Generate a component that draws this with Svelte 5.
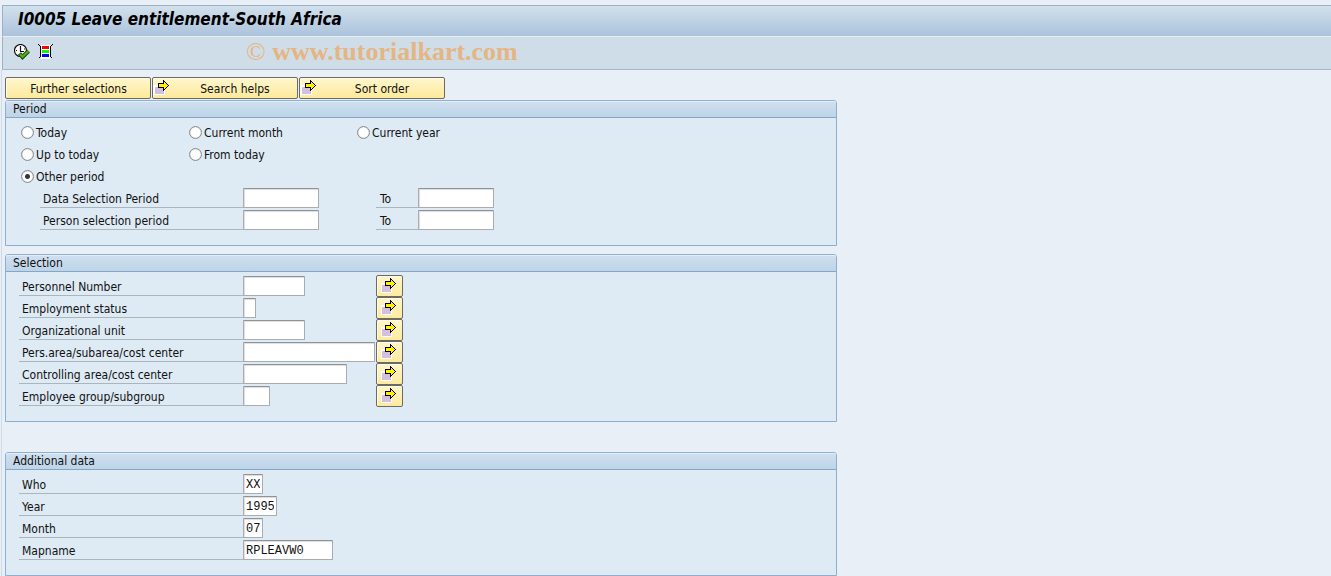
<script lang="ts">
  let period = $state('other');

  const periods = [
    { id: 'today', label: 'Today' },
    { id: 'month', label: 'Current month' },
    { id: 'year', label: 'Current year' },
    { id: 'upto', label: 'Up to today' },
    { id: 'from', label: 'From today' },
    { id: 'other', label: 'Other period' },
  ];

  const ranges = [
    { id: 'data', label: 'Data Selection Period' },
    { id: 'person', label: 'Person selection period' },
  ];

  const selection = [
    { id: 'pernr', label: 'Personnel Number', width: 62 },
    { id: 'status', label: 'Employment status', width: 13 },
    { id: 'orgunit', label: 'Organizational unit', width: 62 },
    { id: 'persarea', label: 'Pers.area/subarea/cost center', width: 132 },
    { id: 'coarea', label: 'Controlling area/cost center', width: 104 },
    { id: 'group', label: 'Employee group/subgroup', width: 27 },
  ];

  const additional = $state([
    { id: 'who', label: 'Who', value: 'XX', width: 20 },
    { id: 'yr', label: 'Year', value: '1995', width: 34 },
    { id: 'mon', label: 'Month', value: '07', width: 20 },
    { id: 'mapname', label: 'Mapname', value: 'RPLEAVW0', width: 90 },
  ]);
</script>

{#snippet arrow()}
  <svg class="arrow" width="16" height="15" viewBox="0 0 16 15" shape-rendering="crispEdges" aria-hidden="true">
    <rect x="0" y="5" width="11" height="10" fill="#fff" />
    <rect x="1" y="7" width="9" height="7" fill="#d3bfdf" />
    <path d="M4.5 3.5H9.5V0.5L14.5 5.5L9.5 10.5V7.5H4.5Z" fill="#ffee00" stroke="#000" />
  </svg>
{/snippet}

<div class="window">
  <header class="title">
    <h1>I0005 Leave entitlement-South Africa</h1>
  </header>

  <div class="toolbar">
    <button class="tool" aria-label="Execute">
      <svg width="16" height="16" viewBox="0 0 16 16">
        <circle cx="6.5" cy="6.5" r="6" fill="#fff" stroke="#111" stroke-width="1.2" />
        <path d="M6.5 2V7.5H10M2 6.5H3M10 5H11M6.5 10V11" fill="none" stroke="#111" stroke-width="1.2" />
        <path d="M5.5 9.5L8.5 13L14.5 7" fill="none" stroke="#163c08" stroke-width="4" />
        <path d="M6 10L8.5 12.8L14.5 7" fill="none" stroke="#4fae1c" stroke-width="2.4" />
      </svg>
    </button>
    <button class="tool" aria-label="Dynamic selections">
      <svg width="16" height="16" viewBox="0 0 16 16" shape-rendering="crispEdges">
        <rect x="3" y="1" width="9" height="14" fill="#fff" />
        <rect x="4" y="2" width="7" height="3" fill="#f00" />
        <rect x="4" y="6" width="7" height="3" fill="#0f0" />
        <rect x="4" y="10" width="7" height="3" fill="#00f" />
        <path d="M0.5 0.5L2.5 2.5V12.5L0.5 14.5M14.5 0.5L12.5 2.5V12.5L14.5 14.5" fill="none" stroke="#000" />
      </svg>
    </button>
    <div class="watermark"><span>©</span> www.tutorialkart.com</div>
  </div>

  <main>
    <div class="actions">
      <button class="action"><span>Further selections</span></button>
      <button class="action">{@render arrow()}<span>Search helps</span></button>
      <button class="action">{@render arrow()}<span>Sort order</span></button>
    </div>

    <section class="panel">
      <h2>Period</h2>
      <div class="body">
        <div class="radios">
          {#each periods as p}
            <label class="radio">
              <input type="radio" name="period" value={p.id} bind:group={period} />
              <span>{p.label}</span>
            </label>
          {/each}
        </div>
        {#each ranges as r}
          <div class="row indent">
            <label class="name" for="{r.id}-from">{r.label}</label>
            <div><input class="field date" id="{r.id}-from" type="text" /></div>
            <label class="name to" for="{r.id}-to">To</label>
            <input class="field date" id="{r.id}-to" type="text" />
          </div>
        {/each}
      </div>
    </section>

    <section class="panel">
      <h2>Selection</h2>
      <div class="body">
        {#each selection as s}
          <div class="row">
            <label class="name" for={s.id}>{s.label}</label>
            <div><input class="field" id={s.id} type="text" style="width:{s.width}px" /></div>
            <button class="multi" aria-label="Multiple selection: {s.label}">{@render arrow()}</button>
          </div>
        {/each}
      </div>
    </section>

    <section class="panel extra">
      <h2>Additional data</h2>
      <div class="body">
        {#each additional as a}
          <div class="row">
            <label class="name" for={a.id}>{a.label}</label>
            <div><input class="field" id={a.id} type="text" bind:value={a.value} style="width:{a.width}px" /></div>
          </div>
        {/each}
      </div>
    </section>
  </main>
</div>

<style>
  :global(body) {
    margin: 0;
    background: #e8eff6;
  }

  * {
    box-sizing: border-box;
  }

  .window {
    padding: 5px 0 0 2px;
    font-family: Tahoma, "DejaVu Sans Condensed", "DejaVu Sans", sans-serif;
    font-size: 12px;
    line-height: 16px;
    color: #111;
  }

  .title {
    height: 32px;
    padding: 3px 15px;
    border-top: 1px solid #9db1c6;
    border-left: 1px solid #9db1c6;
    border-bottom: 1px solid #e6eef5;
    background: linear-gradient(#d2e0ec, #abc3dc);
  }

  h1 {
    margin: 0;
    font-size: 17px;
    line-height: 20px;
    font-style: italic;
    font-weight: bold;
    color: #000;
  }

  .toolbar {
    display: flex;
    align-items: center;
    gap: 8px;
    height: 33px;
    padding: 0 0 2px 11px;
    border-left: 1px solid #9db1c6;
    border-bottom: 1px solid #a5b7c8;
    background: #cfdde8;
  }

  .tool {
    display: flex;
    padding: 0;
    border: 0;
    background: none;
  }

  .watermark {
    margin-left: 184px;
    font-family: "Liberation Serif", serif;
    font-size: 26px;
    line-height: 30px;
    font-weight: bold;
    color: #e5b582;
  }

  .watermark span {
    font-weight: normal;
  }

  main {
    margin-left: -1px;
    padding: 7px 3px 0;
    border-left: 1px solid #d0dbe7;
  }

  .actions {
    display: flex;
    gap: 1px;
    margin-bottom: 1px;
  }

  button {
    font: inherit;
    color: inherit;
  }

  .action,
  .multi {
    display: flex;
    align-items: center;
    height: 22px;
    border: 1px solid #6a6a66;
    border-radius: 2px;
    background: linear-gradient(#fff6cc, #fdea9b);
    box-shadow: inset 1px 1px #fffbe6;
  }

  .action {
    width: 146px;
    padding: 0 0 0 1px;
  }

  .action span {
    flex: 1;
    padding-top: 2px;
    text-align: center;
  }

  .action .arrow {
    margin: 0 3px 2px 0;
  }

  .multi {
    width: 27px;
    padding: 0 4px 2px;
  }

  .arrow {
    flex: none;
  }

  .panel {
    max-width: 832px;
    margin-bottom: 8px;
    border: 1px solid #8fafd0;
    border-radius: 3px 3px 0 0;
    background: #deeaf4;
  }

  .extra {
    margin-top: 30px;
    margin-bottom: 0;
  }

  h2 {
    height: 17px;
    margin: 0;
    padding-left: 7px;
    border-bottom: 1px solid #86a6c8;
    border-radius: 2px 2px 0 0;
    background: linear-gradient(#d0e0ef, #bdd4e9);
    box-shadow: inset 0 1px #e2edf6;
    font-size: 12px;
    line-height: 16px;
    font-weight: normal;
  }

  .body {
    padding: 3px 13px 14px;
  }

  .radios {
    display: grid;
    grid-template-columns: repeat(3, 168px);
    padding-left: 2px;
  }

  .radio {
    display: flex;
    align-items: center;
    gap: 2px;
    height: 22px;
  }

  .radio span {
    padding-top: 2px;
  }

  /* the sixth option stands alone on the third line */
  .radio:nth-child(6) {
    grid-column: 1;
  }

  .radio input {
    appearance: none;
    width: 13px;
    height: 13px;
    margin: 0;
    border: 1px solid #8c8c8c;
    border-radius: 50%;
    background: #fff;
    box-shadow: inset 0 0 1px #999;
  }

  .radio input:checked {
    background: radial-gradient(circle, #33334a 2px, #fff 3px);
  }

  .row {
    display: grid;
    grid-template-columns: 224px 133px 42px auto;
    justify-content: start;
    align-items: center;
    height: 22px;
  }

  .row > div {
    display: flex;
  }

  .name {
    height: 20px;
    padding: 3px 3px 0;
    border-bottom: 1px solid #adb5bc;
  }

  .indent .name:first-child {
    margin-left: 21px;
  }

  .indent .to {
    padding-left: 4px;
  }

  .field {
    height: 20px;
    padding: 1px 2px 0;
    border: 1px solid #a9acb0;
    border-top-color: #8f9296;
    border-radius: 1px;
    background: #fff;
    box-shadow: inset 1px 1px 1px #ddd;
    font-family: "Liberation Mono", monospace;
    font-size: 12px;
    color: #111;
  }

  .date {
    width: 76px;
  }
</style>
